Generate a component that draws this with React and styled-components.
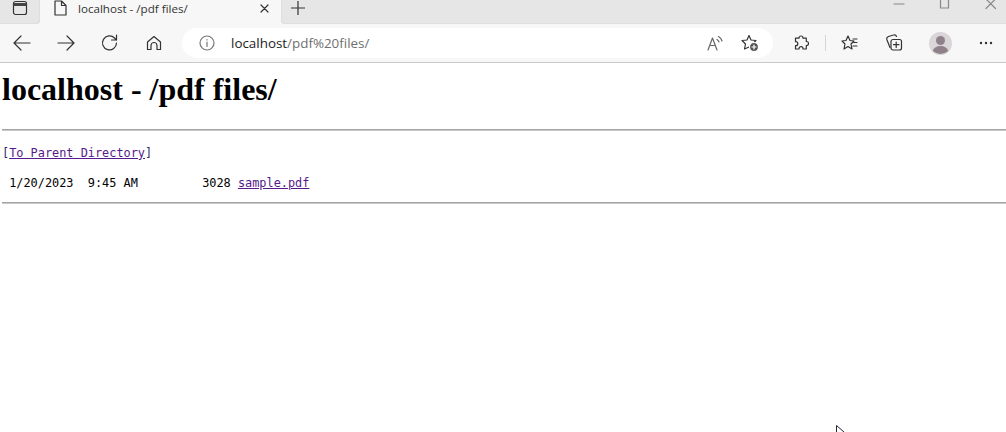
import React from "react";
import styled, { createGlobalStyle } from "styled-components";

const Global = createGlobalStyle`
  html, body { margin: 0; padding: 0; background: #fff; overflow: hidden; }
  #root { width: 1006px; height: 432px; position: relative; overflow: hidden; }
`;

const Strip = styled.div`
  height: 24px; background: #f7f7f7; display: flex; align-items: flex-start;
  font-family: "Segoe UI", "Open Sans", "Noto Sans", sans-serif;
`;
const FirstSlot = styled.div`
  width: 40px; height: 24px; padding-bottom: 8px; box-sizing: border-box; background: #e6e6e6; flex: none;
  border-radius: 0 0 4px 0; box-shadow: inset -1px -1px 0 #dedede;
  display: flex; align-items: center; justify-content: center;
`;
const Tab = styled.div`
  width: 241px; height: 24px; display: flex; align-items: center; flex: none;
  padding: 0 12px 8px 14px; box-sizing: border-box;
`;
const TabTitle = styled.span`
  flex: 1; margin-left: 11px; font-size: 11.6px; color: #333; white-space: nowrap;
`;
const RestOfStrip = styled.div`
  flex: 1; height: 24px; background: #e6e6e6; border-radius: 0 0 0 4px; display: flex; box-shadow: inset 1px -1px 0 #dedede;
`;
const PlusSlot = styled.div`
  width: 34px; height: 15px; display: flex; align-items: center; justify-content: center; flex: none;
`;
const WindowControls = styled.div`
  margin-left: auto; margin-right: -8px; display: flex; height: 14px; align-items: flex-start;
`;
const WinButton = styled.div`
  width: 46px; height: 14px; display: flex; justify-content: center; overflow: hidden;
`;
const Toolbar = styled.div`
  height: 38px; background: #f7f7f7; border-bottom: 1px solid #c8c8c8; display: flex; align-items: center;
  font-family: "Segoe UI", "Open Sans", "Noto Sans", sans-serif;
`;
const NavButton = styled.div`
  width: ${p => p.$w || 44}px; margin-left: ${p => p.$ml || 0}px; height: 30px; display: flex; align-items: center; justify-content: center; flex: none;
`;
const AddressBar = styled.div`
  margin-left: 6px; width: 591px; height: 30px; background: #fff; border-radius: 15px; display: flex; align-items: center;
  flex: none; padding: 0 14px 0 17px; box-sizing: border-box;
`;
const Url = styled.div`
  flex: 1; margin-left: 16px; font-size: 13.4px; color: #222; white-space: nowrap;
`;
const UrlRest = styled.span` color: #6f6f6f; `;
const Divider = styled.div` width: 1px; height: 16px; background: #d4d4d4; flex: none; margin: 0 0 0 1px; `;

const Page = styled.main`
  padding: 0 0 0 2px; color: #000; font-family: "Liberation Serif", serif;
`;
const Heading = styled.h1`
  margin: 0; padding-top: 9px; font-size: 32px; line-height: 34px; font-weight: bold; white-space: nowrap;
`;
const Rule = styled.hr`
  margin: ${p => p.$top}px 0 0; border: 0; border-top: 1px solid #a4a4a4; box-sizing: border-box; height: 2px; background: #c8c8c8;
`;
const Listing = styled.pre`
  margin: 15px 0 0; font-family: "DejaVu Sans Mono", monospace; font-size: 11.9px; color: #000;
  letter-spacing: -0.01px;
`;
const Line = styled.div` height: 30px; line-height: 15px; `;
const Bracket = styled.span` color: #2f2a6b; `;
const Link = styled.a` color: #551a8b; text-decoration: underline; `;
const Cursor = styled.svg` position: absolute; left: 836px; top: 425px; `;

const S = { fill: "none", stroke: "#333", strokeWidth: 1.2, strokeLinecap: "round", strokeLinejoin: "round" };

export default function App() {
  return (
    <>
      <Global />
      <Strip>
        <FirstSlot>
          <svg width="16" height="16" viewBox="0 0 16 16" {...S}>
            <rect x="1.500" y="1.500" width="13" height="13" rx="2" />
            <path d="M1.500 4.500h13" strokeWidth="3" strokeLinecap="butt" stroke="#444" />
          </svg>
        </FirstSlot>
        <Tab>
          <svg width="13" height="16" viewBox="0 0 13 16" {...S}>
            <path d="M1 1h6.500l4.500 4.500v9.500H1zM7.500 1v4.500H12" />
          </svg>
          <TabTitle>localhost - /pdf files/</TabTitle>
          <svg width="9" height="9" viewBox="0 0 9 9" {...S}><path d="M1 1l7 7M8 1l-7 7" /></svg>
        </Tab>
        <RestOfStrip>
          <PlusSlot>
            <svg width="14" height="14" viewBox="0 0 14 14" {...S}><path d="M7 0v14M0 7h14" /></svg>
          </PlusSlot>
          <WindowControls>
            <WinButton><svg width="12" height="14" viewBox="0 0 12 14" {...S} stroke="#888"><path d="M1 4h10" /></svg></WinButton>
            <WinButton><svg width="12" height="14" viewBox="0 0 12 14" {...S} stroke="#888"><path d="M1.500 -4h8v12h-8z" /></svg></WinButton>
            <WinButton><svg width="12" height="14" viewBox="0 0 12 14" {...S} stroke="#888"><path d="M1 -1l9.500 9.500M10.500 -1l-9.500 9.500" /></svg></WinButton>
          </WindowControls>
        </RestOfStrip>
      </Strip>
      <Toolbar>
        <NavButton>
          <svg width="18" height="16" viewBox="0 0 18 16" {...S}><path d="M1 8h16M8 1L1 8l7 7" /></svg>
        </NavButton>
        <NavButton>
          <svg width="18" height="16" viewBox="0 0 18 16" {...S}><path d="M1 8h16M10 1l7 7-7 7" /></svg>
        </NavButton>
        <NavButton>
          <svg width="18" height="18" viewBox="0 0 18 18" {...S}><path d="M15.500 9a7 7 0 1 1-2-5L15.500 6M15.500 1v5h-5" /></svg>
        </NavButton>
        <NavButton>
          <svg width="16" height="16" viewBox="0 0 16 16" {...S}><path d="M1.500 7L8 1.500 14.500 7v7.500h-3.500v-4a3 3 0 0 0-6 0v4H1.500z" /></svg>
        </NavButton>
        <AddressBar>
          <svg width="16" height="16" viewBox="0 0 16 16" {...S} stroke="#777"><circle cx="8" cy="8" r="7" /><path d="M8 7v4.500M8 4.500v.5" /></svg>
          <Url>localhost<UrlRest>/pdf%20files/</UrlRest></Url>
          <svg width="16" height="16" viewBox="0 0 16 16" {...S} stroke="#666"><path d="M1 15L5.500 3 10 15M2.800 10.500h5.400M10 4.500a4 4 0 0 1 2 2.500M11.500 1.500a7 7 0 0 1 3.500 4.500" /></svg>
          <svg style={{ marginLeft: 18 }} width="18" height="18" viewBox="0 0 18 18" {...S}>
            <path d="M8 1.500l2 4.500 5 .5-3.500 3.500L12 15 8 13 3.500 15l1-5L1 6.500 6 6z" />
            <circle cx="13" cy="13" r="4.500" fill="#555" stroke="#fff" />
            <path d="M13 11v4M11 13h4" stroke="#fff" />
          </svg>
        </AddressBar>
        <NavButton $w={46} $ml={5}>
          <svg width="16" height="16" viewBox="0 0 16 16" {...S}><path d="M6 3.200V3a2 2 0 0 1 4 0v.2h3.300v3.300h.2a2 2 0 0 1 0 4h-.2V14H10v-.3a2 2 0 0 0-4 0V14H2.500v-3.300h.3a2 2 0 0 0 0-4h-.3V3.200z" /></svg>
        </NavButton>
        <Divider />
        <NavButton $w={32} $ml={8}>
          <svg width="18" height="16" viewBox="0 0 18 16" {...S}><path d="M7 1l2 4.500 4 .5-3 3 1 5-4-2.500L3 14l1-5-3-3 4-.5zM12 4h4M13 7.500h3M12 11h4" /></svg>
        </NavButton>
        <NavButton $w={56}>
          <svg width="18" height="18" viewBox="0 0 18 18" {...S}><path d="M5 13.500L2 6c-.5-1.500 0-3 1.500-3.500l5-1.500c1.500-.5 2.500 0 3 1.500" /><rect x="6" y="5.500" width="10.500" height="10.500" rx="2" /><path d="M11.200 8v5.500M8.500 10.700H14" /></svg>
        </NavButton>
        <NavButton $w={36}>
          <svg width="23" height="23" viewBox="0 0 23 23"><circle cx="11.500" cy="11.500" r="11.500" fill="#d9d5d8" /><circle cx="11.500" cy="8.500" r="4.500" fill="#8f8189" /><path d="M3.800 19c1-3.500 4-5 7.700-5s6.700 1.500 7.700 5a11.500 11.500 0 0 1-15.400 0z" fill="#8f8189" /></svg>
        </NavButton>
        <NavButton $w={56}>
          <svg width="14" height="4" viewBox="0 0 14 4"><g fill="#333"><circle cx="2" cy="2" r="1.200" /><circle cx="7" cy="2" r="1.200" /><circle cx="12" cy="2" r="1.200" /></g></svg>
        </NavButton>
      </Toolbar>
      <Page>
        <Heading>localhost - /pdf files/</Heading>
        <Rule $top={23} />
        <Listing>
          <Line><Bracket>[</Bracket><Link href="#">To Parent Directory</Link><Bracket>]</Bracket></Line>
          <Line> 1/20/2023  9:45 AM         3028 <Link href="#">sample.pdf</Link></Line>
        </Listing>
        <Rule $top={-4} />
      </Page>
      <Cursor width="9" height="7" viewBox="0 0 9 7"><path d="M.5 .5V7M.5 .5L8 7" fill="none" stroke="#223" strokeWidth="1" /></Cursor>
    </>
  );
}
